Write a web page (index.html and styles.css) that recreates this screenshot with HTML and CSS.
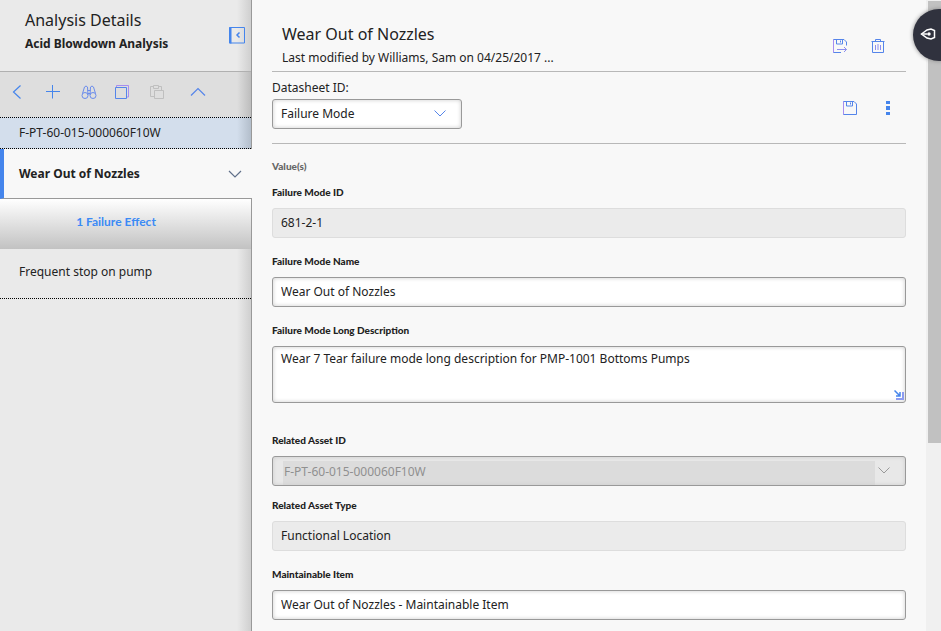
FILE: index.html
```html
<!DOCTYPE html>
<html lang="en">
<head>
  <meta charset="UTF-8">
  <meta name="viewport" content="width=device-width, initial-scale=1.0">
  <title>Analysis Details</title>
  <link rel="stylesheet" href="styles.css">
</head>
<body>
  <aside class="sidebar">
    <header class="sidebar-header">
      <div class="sidebar-titles">
        <h1>Analysis Details</h1>
        <h2>Acid Blowdown Analysis</h2>
      </div>
      <button class="icon-btn" aria-label="Collapse panel">
        <svg width="16" height="17" viewBox="0 0 16 17" fill="none" stroke="#4585ec">
          <path d="M.5.5h15v15.5H.5z"/>
          <path d="M1.5 0v16.5" stroke-width="2"/>
          <path d="M10.500 5.500L8 8l2.500 2.500" stroke-width="1.500"/>
        </svg>
      </button>
    </header>
    <div class="toolbar">
      <div class="tools">
        <button class="icon-btn" aria-label="Back">
          <svg width="16" height="16" viewBox="0 0 16 16" fill="none" stroke="#4585ec" stroke-width="1.200"><path d="M11.500 1.500L4.500 8l7 6.500"/></svg>
        </button>
        <button class="icon-btn" aria-label="Add">
          <svg width="16" height="16" viewBox="0 0 16 16" fill="none" stroke="#4585ec"><path d="M1 7.500h14M7.500 1v13.500"/></svg>
        </button>
        <button class="icon-btn" aria-label="Find">
          <svg width="16" height="16" viewBox="0 0 16 16" fill="none" stroke="#6a8cec">
            <circle cx="4" cy="11.500" r="3"/><circle cx="12" cy="11.500" r="3"/>
            <path d="M1.500 9.500L3.500 3q1.500-2 3 0L7 11M14.500 9.500L12.500 3q-1.500-2-3 0L9 11M6.500 6.500h3M7 9.500h2"/>
          </svg>
        </button>
      </div>
      <div class="tools tools-edit">
        <button class="icon-btn" aria-label="Copy">
          <svg width="16" height="16" viewBox="0 0 16 16" fill="none" stroke="#5585ea">
            <path d="M2.500 3V1.500h12V13H13" stroke="#a78df0"/><path d="M1.500 3.500h11v11h-11z"/>
          </svg>
        </button>
        <button class="icon-btn" aria-label="Paste" disabled>
          <svg width="16" height="16" viewBox="0 0 16 16" fill="none" stroke="#bfbfbf">
            <path d="M5 12.500H1.500v-10H4M10 2.500h2.500V6M4.500 1.500h5v3h-5z"/><path d="M5.500 6.500h9v8h-9z"/>
          </svg>
        </button>
      </div>
      <button class="icon-btn" aria-label="Collapse all">
        <svg width="16" height="16" viewBox="0 0 16 16" fill="none" stroke="#5585ea" stroke-width="1.200"><path d="M1 11.500L8 4.500l7 7"/></svg>
      </button>
    </div>
    <nav>
      <a class="row asset" href="#">F-PT-60-015-000060F10W</a>
      <a class="row selected" href="#">
        Wear Out of Nozzles
        <svg width="14" height="8" viewBox="0 0 14 8" fill="none" stroke="#60708a" stroke-width="1.200"><path d="M1 1l6 6 6-6"/></svg>
      </a>
      <div class="effects">1 Failure Effect</div>
      <a class="row effect" href="#">Frequent stop on pump</a>
    </nav>
  </aside>

  <main class="content">
    <header class="content-header">
      <div>
        <h2>Wear Out of Nozzles</h2>
        <p>Last modified by Williams, Sam on 04/25/2017 ...</p>
      </div>
      <div class="actions">
        <button class="icon-btn" aria-label="Save and close">
          <svg width="16" height="16" viewBox="0 0 16 16" fill="none" stroke="#5585ea">
            <path d="M9 14.500H1.500v-13H12l2.500 2.500v3.500"/><path d="M1.500 1.500v13" stroke="#a78df0"/><path d="M4.500 1.500v4.500h6V1.500M8.500 2.500v2"/><path d="M5 11.500h9.500M12 9l2.500 2.500L12 14" stroke="#8d8eee"/>
          </svg>
        </button>
        <button class="icon-btn" aria-label="Delete">
          <svg width="16" height="16" viewBox="0 0 16 16" fill="none" stroke="#5585ea">
            <path d="M1.500 3.500h13M5.500 3V1.500h5V3M2.500 4v10.500h11V4"/><path d="M5.500 7v5M8 6v6M10.500 7v5" stroke="#8d8eee"/>
          </svg>
        </button>
      </div>
    </header>

    <div class="datasheet">
      <div>
        <label for="datasheet">Datasheet ID:</label>
        <div class="select-box">
          <select id="datasheet"><option>Failure Mode</option></select>
          <svg class="chevron" width="12" height="7" viewBox="0 0 12 7" fill="none" stroke="#5585ea"><path d="M.5.5L6 6l5.500-5.500"/></svg>
        </div>
      </div>
      <div class="actions">
        <button class="icon-btn" aria-label="Save">
          <svg width="16" height="16" viewBox="0 0 16 16" fill="none" stroke="#5585ea">
            <path d="M1.500 1.500H12L14.500 4v10.500h-13z"/><path d="M1.500 1.500v13" stroke="#a78df0"/><path d="M4.500 1.500v4.500h6V1.500M8.500 2.500v2"/>
          </svg>
        </button>
        <button class="icon-btn" aria-label="More options">
          <svg width="16" height="16" viewBox="0 0 16 16" fill="#4585ec"><path d="M6 1h4v3H6zM6 6h4v4H6zM6 12h4v3H6z"/></svg>
        </button>
      </div>
    </div>

    <form class="fields">
      <h3>Value(s)</h3>
      <div class="field">
        <label for="mode-id">Failure Mode ID</label>
        <input id="mode-id" type="text" value="681-2-1" readonly>
      </div>
      <div class="field">
        <label for="mode-name">Failure Mode Name</label>
        <input id="mode-name" type="text" value="Wear Out of Nozzles">
      </div>
      <div class="field field-long">
        <label for="mode-desc">Failure Mode Long Description</label>
        <div class="textarea-box">
          <textarea id="mode-desc">Wear 7 Tear failure mode long description for PMP-1001 Bottoms Pumps</textarea>
          <svg class="grip" width="10" height="10" viewBox="0 0 10 10" fill="none" stroke="#4585ec">
            <path d="M.5.500l5 5M6 2v4H2" stroke-width="1.500"/><path d="M2 9h7V2" stroke="#8d9bf0" stroke-width="2"/>
          </svg>
        </div>
      </div>
      <div class="field field-asset">
        <label for="asset-id">Related Asset ID</label>
        <div class="select-box locked">
          <select id="asset-id" disabled><option>F-PT-60-015-000060F10W</option></select>
          <svg class="chevron" width="12" height="7" viewBox="0 0 12 7" fill="none" stroke="#999"><path d="M.5.5L6 6l5.500-5.500"/></svg>
        </div>
      </div>
      <div class="field">
        <label for="asset-type">Related Asset Type</label>
        <input id="asset-type" type="text" value="Functional Location" readonly>
      </div>
      <div class="field">
        <label for="item">Maintainable Item</label>
        <input id="item" type="text" value="Wear Out of Nozzles - Maintainable Item">
      </div>
    </form>
  </main>

  <div class="scrollbar"><div class="thumb"></div></div>
  <button class="bubble" aria-label="Open help">
    <svg width="16" height="12" viewBox="0 0 16 12" fill="none" stroke="#fff" stroke-width="1.500">
      <path d="M1.500 6L7 2l4-1 3.500 1.500v7L11 11l-4-1z"/><path d="M1.500 6h6"/><circle cx="9" cy="6" r="1.700" fill="#fff" stroke="none"/>
    </svg>
  </button>
</body>
</html>
```
FILE: styles.css
```css
* {
  box-sizing: border-box;
}
body {
  margin: 0;
  height: 100vh;
  display: flex;
  overflow: hidden;
  position: relative;
  font-family: "Noto Sans", "Open Sans", sans-serif;
  font-size: 12px;
  line-height: 16px;
  color: #222;
  background: #f8f8f8;
}
h1, h2, h3, p {
  margin: 0;
}
input, select, textarea, button {
  font: inherit;
  color: inherit;
}
a {
  color: inherit;
  text-decoration: none;
}
.icon-btn {
  display: block;
  padding: 0;
  border: 0;
  background: none;
  cursor: pointer;
}
.icon-btn svg {
  display: block;
}

/* left panel */
.sidebar {
  flex: 0 0 252px;
  border-right: 1px solid #999;
  background: linear-gradient(to left, #cfcfcf, #eaeaea 14px);
}
.sidebar-header {
  display: flex;
  justify-content: space-between;
  height: 72px;
  padding: 8px 6px 0 25px;
  border-bottom: 1px solid #b0b0b0;
}
.sidebar-header .icon-btn {
  align-self: flex-start;
  margin-top: 19px;
}
.sidebar-header h1 {
  font-size: 16px;
  font-weight: 400;
  line-height: 24px;
}
.sidebar-header h2 {
  font-size: 12px;
  line-height: 24px;
}
.toolbar {
  display: flex;
  align-items: center;
  height: 45px;
  padding: 0 9px 5px;
  background: linear-gradient(to left, #bdbdbd, #dedede 14px);
}
.tools {
  display: flex;
  gap: 20px;
}
.tools-edit {
  gap: 19px;
  margin: 0 25px 0 17px;
}
.row {
  display: flex;
  align-items: center;
  justify-content: space-between;
  padding: 0 10px 0 19px;
}
.asset {
  height: 32px;
  border-top: 1px dotted #000;
  border-bottom: 1px dotted #000;
  background: linear-gradient(to left, #b3becb, #d3deec 14px);
}
.selected {
  height: 50px;
  padding-left: 15px;
  margin-right: -1px;
  border-left: 4px solid #4585ec;
  border-bottom: 1px solid #999;
  background: #f8f8f8;
  font-weight: 700;
}
.effects {
  height: 50px;
  padding: 15px 19px 0 0;
  text-align: center;
  color: #3b8af5;
  font-family: Lato, "Noto Sans", sans-serif;
  font-weight: 700;
  background: linear-gradient(#fff, #c2c2c2);
}
.effect {
  height: 50px;
  padding-bottom: 4px;
  border-bottom: 1px dotted #000;
}

/* record */
.content {
  flex: 1;
  min-width: 0;
  padding: 0 20px;
}
.content-header {
  display: flex;
  justify-content: space-between;
  height: 72px;
  padding: 22px 20px 0 10px;
  border-bottom: 1px solid #b8b8b8;
}
.content-header h2 {
  font-size: 16px;
  font-weight: 400;
  line-height: 24px;
}
.content-header p {
  line-height: 24px;
}
.actions {
  display: flex;
  align-items: flex-start;
  gap: 22px;
  padding-top: 16px;
}
.datasheet {
  display: flex;
  justify-content: space-between;
  height: 72px;
  padding: 8px 10px 0 0;
  border-bottom: 1px solid #b8b8b8;
}
.datasheet label {
  display: block;
  margin-bottom: 3px;
}
.datasheet .select-box {
  width: 190px;
}
.datasheet .actions {
  padding-top: 20px;
}
.select-box, .textarea-box {
  position: relative;
}
input, select, textarea {
  display: block;
  width: 100%;
  height: 30px;
  margin: 0;
  padding: 0 8px;
  border: 1px solid #999;
  border-radius: 3px;
  background: #fff;
  box-shadow: inset 0 0 4px #ccc;
}
input {
  padding-bottom: 2px;
}
select {
  appearance: none;
}
.chevron {
  position: absolute;
  right: 16px;
  top: 11px;
  pointer-events: none;
}
.fields {
  padding-top: 14px;
}
.fields h3, .field label {
  font-family: Lato, "Noto Sans", sans-serif;
  font-size: 10px;
  font-weight: 900;
}
.fields h3 {
  margin-bottom: 10px;
  color: #666;
}
.field {
  margin-bottom: 15px;
}
.field label {
  display: block;
  margin-bottom: 8px;
}
.field-long {
  margin-bottom: 29px;
}
.field-asset {
  margin-bottom: 11px;
}
input:read-only {
  border-color: #ddd;
  background: #ebebeb;
  box-shadow: none;
}
textarea {
  height: 57px;
  padding: 4px 8px;
  resize: none;
}
.grip {
  position: absolute;
  right: 2px;
  bottom: 3px;
}
.locked select {
  padding: 2px 8px 0 11px;
  opacity: 1;
  color: #909090;
  background: linear-gradient(#dcdcdc, #dcdcdc) 10px 4px / calc(100% - 40px) 100% no-repeat #e8e8e8;
}

.scrollbar {
  flex: 0 0 15px;
  padding-left: 2px;
  background: #f0f0f0;
}
.thumb {
  height: 70%;
  margin-top: 1px;
  background: #c1c1c1;
}
.bubble {
  position: absolute;
  top: 9px;
  right: -24px;
  width: 52px;
  height: 52px;
  padding: 0 0 2px 7px;
  border: 0;
  border-radius: 50%;
  background: #30323e;
  box-shadow: 0 0 4px #888;
  text-align: left;
}
.bubble svg {
  display: block;
}
```
